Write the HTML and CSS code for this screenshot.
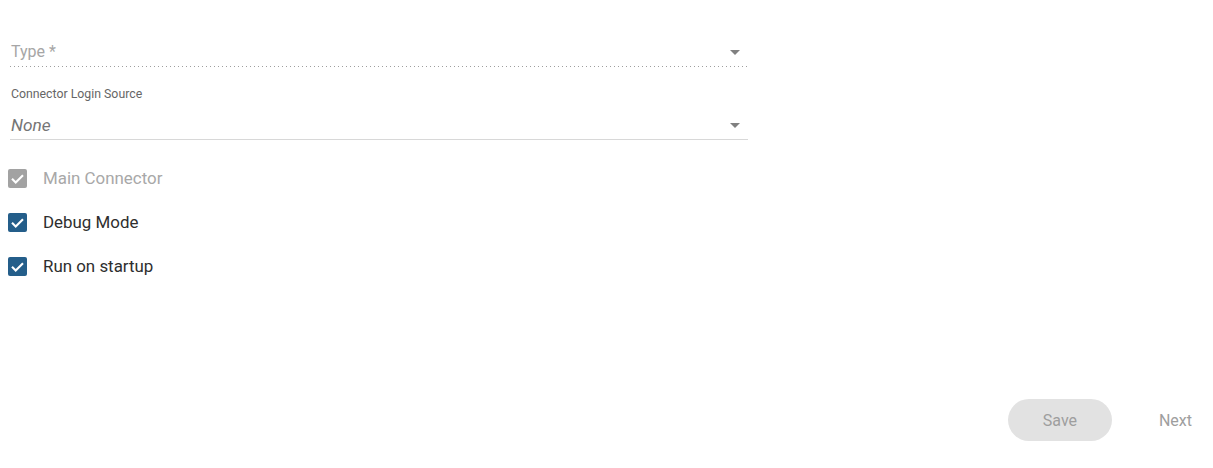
FILE: index.html
```html
<!DOCTYPE html>
<html lang="en">
<head>
<meta charset="utf-8">
<title>Connector</title>
<link rel="stylesheet" href="styles.css">
</head>
<body>
<div class="page">
  <div class="form">
    <div class="select select-type">
      <span class="placeholder">Type *</span>
      <span class="arrow"></span>
    </div>
    <div class="field-login">
      <div class="label">Connector Login Source</div>
      <div class="select select-login">
        <span class="value">None</span>
        <span class="arrow"></span>
      </div>
    </div>
    <div class="checks">
      <label class="check disabled">
        <span class="box"><svg viewBox="0 0 18 18" width="19" height="19"><path d="M3.8 9.3 L7.3 12.8 L14.2 5.9" fill="none" stroke="#fff" stroke-width="2"/></svg></span>
        <span class="text">Main Connector</span>
      </label>
      <label class="check">
        <span class="box"><svg viewBox="0 0 18 18" width="19" height="19"><path d="M3.8 9.3 L7.3 12.8 L14.2 5.9" fill="none" stroke="#fff" stroke-width="2"/></svg></span>
        <span class="text">Debug Mode</span>
      </label>
      <label class="check">
        <span class="box"><svg viewBox="0 0 18 18" width="19" height="19"><path d="M3.8 9.3 L7.3 12.8 L14.2 5.9" fill="none" stroke="#fff" stroke-width="2"/></svg></span>
        <span class="text">Run on startup</span>
      </label>
    </div>
  </div>
  <div class="actions">
    <button class="btn btn-save" type="button">Save</button>
    <button class="btn btn-next" type="button">Next</button>
  </div>
</div>
</body>
</html>
```
FILE: styles.css
```css
* { box-sizing: border-box; }
html, body { margin: 0; padding: 0; background: #fff; }
body { font-family: Roboto, "Noto Sans", Arial, sans-serif; }

.page {
  width: 1213px;
  height: 468px;
  display: flex;
  flex-direction: column;
}

.form {
  width: 748px;
  padding: 42px 0 0 10px;
}

.select {
  display: flex;
  align-items: center;
  justify-content: space-between;
}

.select-type {
  height: 25px;
  padding-bottom: 5px;
  background-image: linear-gradient(to right, rgba(0,0,0,0.38) 0, rgba(0,0,0,0.38) 25%, transparent 25%);
  background-size: 4px 1px;
  background-repeat: repeat-x;
  background-position: 0 bottom;
}

.placeholder {
  font-size: 16px;
  line-height: 20px;
  color: #a6a6a6;
  padding-left: 1px;
}

.arrow {
  width: 0;
  height: 0;
  border-left: 5px solid transparent;
  border-right: 5px solid transparent;
  border-top: 5px solid #808080;
  margin-right: 8px;
}

.field-login {
  margin-top: 20px;
}

.label {
  font-size: 12.3px;
  line-height: 14px;
  color: #666;
  padding-left: 1px;
}

.select-login {
  margin-top: 14px;
  height: 25px;
  padding-bottom: 4px;
  border-bottom: 1px solid #d8d8d8;
}

.value {
  font-size: 17.3px;
  line-height: 20px;
  font-style: italic;
  color: #757575;
  padding-left: 1px;
}

.checks {
  margin-top: 26px;
  display: flex;
  flex-direction: column;
  gap: 20px;
}

.check {
  display: flex;
  align-items: center;
  height: 24px;
  margin-left: -2px;
}

.box {
  width: 19px;
  height: 19px;
  border-radius: 2px;
  background: #245e8a;
  display: flex;
}

.check.disabled .box { background: #a2a2a2; }

.text {
  margin-left: 16px;
  font-size: 16.9px;
  color: #2e2e2e;
}

.check.disabled .text { color: #a8a8a8; }

.actions {
  margin-top: auto;
  display: flex;
  justify-content: flex-end;
  align-items: center;
  gap: 31px;
  padding: 0 5px 27px 0;
}

.btn {
  font-family: Roboto, "Noto Sans", Arial, sans-serif;
  font-size: 16px;
  border: none;
  background: transparent;
  color: #9e9e9e;
  height: 42px;
  padding: 0 16px;
}

.btn-save {
  width: 104px;
  border-radius: 21px;
  background: #e2e2e2;
}
```
